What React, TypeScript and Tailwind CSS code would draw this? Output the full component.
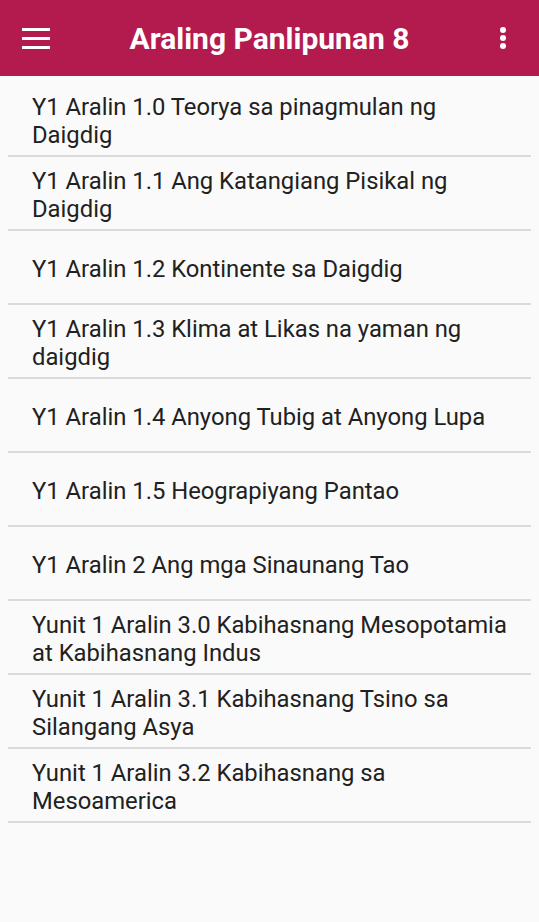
const LESSONS = [
  'Y1 Aralin 1.0 Teorya sa pinagmulan ng Daigdig',
  'Y1 Aralin 1.1 Ang Katangiang Pisikal ng Daigdig',
  'Y1 Aralin 1.2 Kontinente sa Daigdig',
  'Y1 Aralin 1.3 Klima at Likas na yaman ng daigdig',
  'Y1 Aralin 1.4 Anyong Tubig at Anyong Lupa',
  'Y1 Aralin 1.5 Heograpiyang Pantao',
  'Y1 Aralin 2 Ang mga Sinaunang Tao',
  'Yunit 1 Aralin 3.0 Kabihasnang Mesopotamia at Kabihasnang Indus',
  'Yunit 1 Aralin 3.1 Kabihasnang Tsino sa Silangang Asya',
  'Yunit 1 Aralin 3.2 Kabihasnang sa Mesoamerica',
]

export default function App() {
  return (
    <div className="min-h-[922px] bg-[#fafafa] font-['Roboto',sans-serif]">
      {/* ── Toolbar ── */}
      <header className="h-[76px] bg-[#b31b4e] flex items-center px-[22px] text-white">
        <div className="w-[28px] flex flex-col gap-[6px]">
          <span className="block h-[3px] bg-white" />
          <span className="block h-[3px] bg-white" />
          <span className="block h-[3px] bg-white" />
        </div>
        <h1 className="flex-1 text-center text-[30px] font-bold">
          Araling Panlipunan 8
        </h1>
        <div className="w-[28px] flex flex-col items-center gap-[2px]">
          <span className="block w-[6px] h-[6px] rounded-full bg-white" />
          <span className="block w-[6px] h-[6px] rounded-full bg-white" />
          <span className="block w-[6px] h-[6px] rounded-full bg-white" />
        </div>
      </header>

      {/* ── Lesson list ── */}
      <ul className="px-2 pt-[7px]">
        {LESSONS.map(title => (
          <li
            key={title}
            className="h-[74px] flex items-center border-b-2 border-[#dadada] pl-6 pr-4 pt-[4px]"
          >
            <span className="text-[23.8px] leading-[28px] text-[#212121]">{title}</span>
          </li>
        ))}
      </ul>
    </div>
  )
}
